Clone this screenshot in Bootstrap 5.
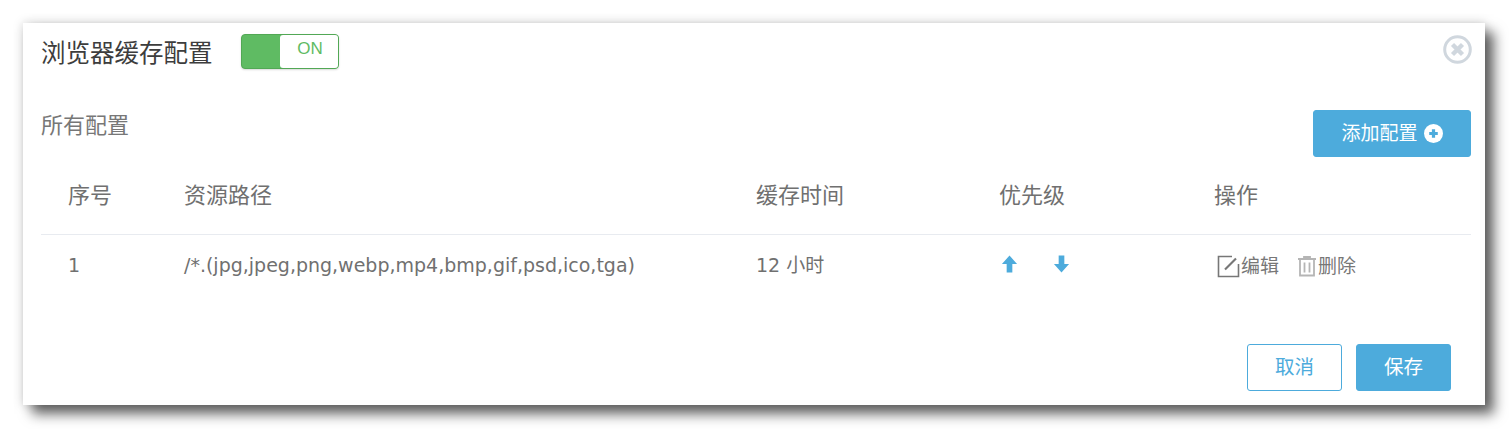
<!DOCTYPE html>
<html lang="zh-CN">
<head>
  <meta charset="UTF-8" />
  <meta name="viewport" content="width=device-width, initial-scale=1" />
  <title>浏览器缓存配置</title>
  <link href="https://cdn.jsdelivr.net/npm/bootstrap@5.3.3/dist/css/bootstrap.min.css" rel="stylesheet" />
  <style>
    body {
      font-family: "DejaVu Sans", "Noto Sans CJK SC", sans-serif;
      background: #fff;
      color: #666;
      padding: 23px 24px 24px 23px;
      overflow: hidden;
    }
    .cache-panel {
      height: 382px;
      padding: 0 14px 14px 18px;
      background: #fff;
      box-shadow: 9px 9px 12px rgba(0, 0, 0, .6), 0 0 10px rgba(0, 0, 0, .18);
    }
    .panel-head { height: 87px; padding-top: 11px; }
    .panel-title { font-size: 24.5px; line-height: 40px; color: #3d3d3d; margin: 0 28px 0 0; font-weight: 400; }
    .cache-switch {
      width: 98px; height: 35px;
      background: #5fbb63; border: 1px solid #52a855; border-radius: 4px;
      padding-left: 38px;
      box-shadow: 0 1px 2px rgba(0, 0, 0, .15);
    }
    .cache-switch span {
      display: block; height: 100%; background: #fff; border-radius: 3px;
      color: #5fbb63; font: 17px/28px "Liberation Sans", sans-serif; text-align: center; padding-left: 3px;
    }
    .close-btn { margin-top: 1px; margin-right: -1px; width: 29px; height: 29px; }
    .sub-row { height: 47px; }
    .sub-title { font-size: 22px; line-height: 32px; margin: 0; color: #777; }
    .btn-sky {
      background: #4dabdc; border: 1px solid #4dabdc; color: #fff; border-radius: 3px;
      font-size: 19px; padding: 0; height: 47px;
    }
    .btn-sky:hover { background: #4dabdc; color: #fff; }
    .btn-add { width: 158px; gap: 6px; }
    .btn-foot { width: 95px; font-size: 19.500px; }
    .panel-foot .btn-ghost, .panel-foot .btn-ghost:hover { background: #fff; color: #4dabdc; border-color: #4dabdc; --bs-btn-border-color: #4dabdc; }
    .cache-table { table-layout: fixed; width: 100%; margin: 0; }
    .cache-table th, .cache-table td { padding: 0 0 0 27px; color: #707070; background: transparent; border: 0; vertical-align: middle; }
    .cache-table th { font-size: 22px; font-weight: 400; height: 77px; border-bottom: 1px solid #e8ebf0; }
    .cache-table td { font-size: 19px; height: 62px; }
    .arrow-cell { margin: -3px 0 0 2px; gap: 35px; }
    .op-cell { margin: 2px 0 0 3px; }
    .op-link { font-size: 19px; color: #777; margin-left: 1px; }
    .op-trash { margin-left: 18px; }
    .panel-foot { margin-top: 48px; padding-right: 20px; gap: 14px; }
  </style>
</head>
<body>

  <div class="cache-panel">
    <!-- head -->
    <div class="panel-head d-flex align-items-start">
      <h1 class="panel-title">浏览器缓存配置</h1>
      <div class="cache-switch"><span>ON</span></div>
      <svg class="close-btn ms-auto" viewBox="0 0 29 29">
        <circle cx="14.500" cy="14.500" r="12.800" fill="none" stroke="#d0d7de" stroke-width="3" />
        <path d="M9.500 9.500l10 10M19.500 9.500l-10 10" stroke="#d0d7de" stroke-width="4.400" />
      </svg>
    </div>

    <div class="sub-row d-flex justify-content-between">
      <p class="sub-title">所有配置</p>
      <button type="button" class="btn btn-sky btn-add d-flex align-items-center justify-content-center">
        添加配置
        <svg width="19" height="19" viewBox="0 0 20 20">
          <circle cx="10" cy="10" r="10" fill="#fff" />
          <path d="M10 5.500v9M5.500 10h9" stroke="#4dabdc" stroke-width="3.400" />
        </svg>
      </button>
    </div>

    <!-- list -->
    <table class="table cache-table">
      <colgroup>
        <col style="width: 116px" />
        <col style="width: 572px" />
        <col style="width: 243px" />
        <col style="width: 215px" />
        <col />
      </colgroup>
      <thead>
        <tr><th>序号</th><th>资源路径</th><th>缓存时间</th><th>优先级</th><th>操作</th></tr>
      </thead>
      <tbody>
        <tr>
          <td>1</td>
          <td>/*.(jpg,jpeg,png,webp,mp4,bmp,gif,psd,ico,tga)</td>
          <td>12 小时</td>
          <td>
            <div class="arrow-cell d-flex">
              <svg width="17" height="20" viewBox="0 0 18 20"><path d="M9 1l8 9h-5v9H6v-9H1z" fill="#4dabdc" /></svg>
              <svg width="17" height="20" viewBox="0 0 18 20"><path d="M9 19l8-9h-5V1H6v9H1z" fill="#4dabdc" /></svg>
            </div>
          </td>
          <td>
            <div class="op-cell d-flex align-items-center">
              <svg width="23" height="23" viewBox="0 0 23 23">
                <path d="M15 1.500H1.500v20h20V9" fill="none" stroke="#777" stroke-width="1.600" />
                <path d="M8 14.500l11-11" stroke="#777" stroke-width="2.200" />
              </svg>
              <span class="op-link">编辑</span>
              <svg class="op-trash" width="20" height="22" viewBox="0 0 20 22">
                <path d="M1 4h18M7 4V2h6v2M3 4v16.500h14V4M7.500 7.500v10M12.500 7.500v10" fill="none" stroke="#b5b5b5" stroke-width="1.800" />
              </svg>
              <span class="op-link">删除</span>
            </div>
          </td>
        </tr>
      </tbody>
    </table>

    <!-- foot -->
    <div class="panel-foot d-flex justify-content-end">
      <button type="button" class="btn btn-sky btn-foot btn-ghost">取消</button>
      <button type="button" class="btn btn-sky btn-foot">保存</button>
    </div>
  </div>

  <script src="https://cdn.jsdelivr.net/npm/bootstrap@5.3.3/dist/js/bootstrap.bundle.min.js"></script>
</body>
</html>
